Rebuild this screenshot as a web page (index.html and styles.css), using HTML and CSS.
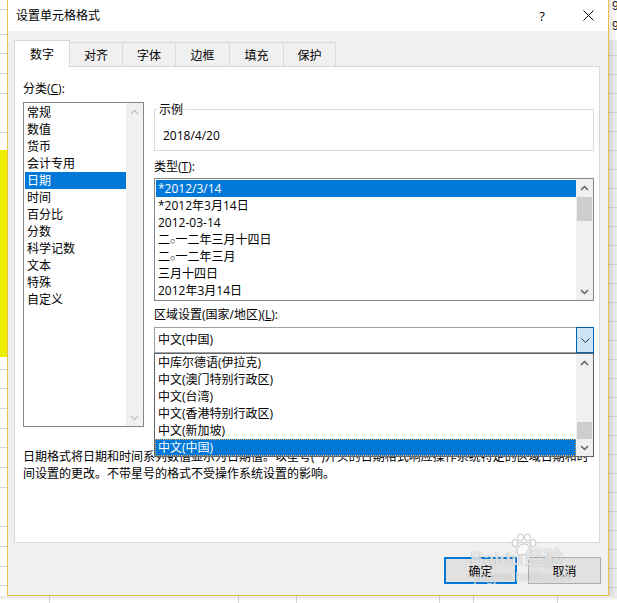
FILE: index.html
```html
<!DOCTYPE html>
<html lang="zh-CN">
<head>
<meta charset="utf-8">
<title>设置单元格格式</title>
<link rel="stylesheet" href="styles.css">
</head>
<body>
<div class="screen">
  <div class="sheet-left"></div>

  <div class="dialog">
    <div class="titlebar">
      <span class="title">设置单元格格式</span>
      <span class="help">?</span>
      <span class="close"><svg width="11" height="11" viewBox="0 0 11 11"><path d="M0.5 0.5 L10.5 10.5 M10.5 0.5 L0.5 10.5" stroke="#000" stroke-width="1" fill="none"/></svg></span>
    </div>

    <div class="body">
      <div class="tabs">
        <div class="tab active">数字</div>
        <div class="tab">对齐</div>
        <div class="tab">字体</div>
        <div class="tab">边框</div>
        <div class="tab">填充</div>
        <div class="tab">保护</div>
      </div>

      <div class="panel">
        <div class="cols">
          <div class="col-left">
            <div class="label">分类(<u>C</u>):</div>
            <div class="listbox category">
              <div class="rows">
                <div class="row">常规</div>
                <div class="row">数值</div>
                <div class="row">货币</div>
                <div class="row">会计专用</div>
                <div class="row selected">日期</div>
                <div class="row">时间</div>
                <div class="row">百分比</div>
                <div class="row">分数</div>
                <div class="row">科学记数</div>
                <div class="row">文本</div>
                <div class="row">特殊</div>
                <div class="row">自定义</div>
              </div>
              <div class="scrollbar disabled">
                <div class="sb-btn"><svg width="9" height="6" viewBox="0 0 9 6"><path d="M1 5 L4.5 1.5 L8 5" fill="none" stroke="#c6c6c6" stroke-width="1.5"/></svg></div>
                <div class="sb-track"></div>
                <div class="sb-btn"><svg width="9" height="6" viewBox="0 0 9 6"><path d="M1 1 L4.5 4.5 L8 1" fill="none" stroke="#c6c6c6" stroke-width="1.5"/></svg></div>
              </div>
            </div>
          </div>

          <div class="col-right">
            <div class="group">
              <div class="group-title">示例</div>
              <div class="group-value">2018/4/20</div>
            </div>

            <div class="label label-type">类型(<u>T</u>):</div>
            <div class="listbox types">
              <div class="rows">
                <div class="row selected">*2012/3/14</div>
                <div class="row">*2012年3月14日</div>
                <div class="row">2012-03-14</div>
                <div class="row">二<span class="ling">○</span>一二年三月十四日</div>
                <div class="row">二<span class="ling">○</span>一二年三月</div>
                <div class="row">三月十四日</div>
                <div class="row">2012年3月14日</div>
              </div>
              <div class="scrollbar">
                <div class="sb-btn"><svg width="9" height="6" viewBox="0 0 9 6"><path d="M1 5 L4.5 1.5 L8 5" fill="none" stroke="#606060" stroke-width="1.5"/></svg></div>
                <div class="sb-track"><div class="sb-thumb thumb-type"></div></div>
                <div class="sb-btn"><svg width="9" height="6" viewBox="0 0 9 6"><path d="M1 1 L4.5 4.5 L8 1" fill="none" stroke="#606060" stroke-width="1.5"/></svg></div>
              </div>
            </div>

            <div class="label label-locale">区域设置(国家/地区)(<u>L</u>):</div>
            <div class="combo-wrap">
              <div class="combo">
                <div class="combo-text">中文(中国)</div>
                <div class="combo-btn"><svg width="9" height="5" viewBox="0 0 9 5"><path d="M0.5 0.5 L4.5 4.5 L8.5 0.5" fill="none" stroke="#333" stroke-width="1"/></svg></div>
              </div>
              <div class="listbox dropdown">
                <div class="rows">
                  <div class="row">中库尔德语(伊拉克)</div>
                  <div class="row">中文(澳门特别行政区)</div>
                  <div class="row">中文(台湾)</div>
                  <div class="row">中文(香港特别行政区)</div>
                  <div class="row">中文(新加坡)</div>
                  <div class="row selected focus">中文(中国)</div>
                </div>
                <div class="scrollbar">
                  <div class="sb-btn"><svg width="9" height="6" viewBox="0 0 9 6"><path d="M1 5 L4.5 1.5 L8 5" fill="none" stroke="#606060" stroke-width="1.5"/></svg></div>
                  <div class="sb-track end"><div class="sb-thumb thumb-drop"></div></div>
                  <div class="sb-btn"><svg width="9" height="6" viewBox="0 0 9 6"><path d="M1 1 L4.5 4.5 L8 1" fill="none" stroke="#606060" stroke-width="1.5"/></svg></div>
                </div>
              </div>
            </div>
          </div>
        </div>

        <div class="desc">
          <div class="desc-line">日期格式将日期和时间系列数值显示为日期值。以星号(*)开头的日期格式响应操作系统特定的区域日期和时</div>
          <div class="desc-line">间设置的更改。不带星号的格式不受操作系统设置的影响。</div>
        </div>
      </div>

      <div class="buttons">
        <div class="btn default">确定</div>
        <div class="btn">取消</div>
      </div>
    </div>
  </div>

  <div class="sheet-right">
    <div class="cell-text">9</div>
    <div class="cell-text">9</div>
  </div>
  <div class="sheet-bottom"></div>

  <div class="watermark">
    <svg class="wm-paw" width="28" height="24" viewBox="0 0 28 24">
      <g fill="rgba(255,255,255,0.75)" stroke="rgba(130,130,130,0.45)" stroke-width="1">
        <ellipse cx="5" cy="10" rx="3" ry="3.6"/>
        <ellipse cx="10.5" cy="4.5" rx="3" ry="3.6"/>
        <ellipse cx="17.5" cy="4.5" rx="3" ry="3.6"/>
        <ellipse cx="23" cy="10" rx="3" ry="3.6"/>
        <path d="M14 11 C9 11 6 17 7 20 C8 23 11 22 14 21.5 C17 22 20 23 21 20 C22 17 19 11 14 11 Z"/>
      </g>
    </svg>
    <div class="wm-brand"><span>Bai</span><span class="wm-du">du</span><span>经验</span></div>
    <div class="wm-url">jingyan.baidu.com</div>
  </div>
</div>
</body>
</html>
```

FILE: styles.css
```css
* { box-sizing: border-box; }

html, body {
  margin: 0;
  padding: 0;
}

body {
  width: 617px;
  height: 603px;
  overflow: hidden;
  font-family: "Open Sans", "Noto Sans CJK SC", sans-serif;
  font-size: 12px;
  color: #000;
  background: #fff;
}

.screen {
  position: relative;
  display: grid;
  grid-template-columns: 7px 602px 8px;
  grid-template-rows: 596px 7px;
  width: 617px;
  height: 603px;
}

/* spreadsheet behind the dialog */
.sheet-left {
  grid-column: 1;
  grid-row: 1;
  background:
    linear-gradient(to bottom, transparent 150px, #eeee00 150px, #eeee00 357px, transparent 357px),
    repeating-linear-gradient(to bottom, #fff 0, #fff 18.7px, #d4d4d4 18.7px, #d4d4d4 19.7px);
  background-position: 0 0, 0 15px;
}

.sheet-right {
  grid-column: 3;
  grid-row: 1;
  overflow: hidden;
  background:
    linear-gradient(to right, rgba(0,0,0,0.10), rgba(0,0,0,0) 7px),
    linear-gradient(to bottom, #fff 0, #fff 40px, transparent 40px),
    repeating-linear-gradient(to bottom, #ececec 0, #ececec 18px, #d2d2d2 18px, #d2d2d2 19px);
  background-position: 0 0, 0 0, 0 18px;
}

.cell-text {
  height: 20px;
  line-height: 12px;
  padding-left: 3px;
  font-family: "Liberation Sans", sans-serif;
  font-size: 12px;
  color: #222;
}

.sheet-bottom {
  grid-column: 1 / 4;
  grid-row: 2;
  background:
    linear-gradient(to bottom, rgba(0,0,0,0.10), rgba(0,0,0,0) 5px),
    linear-gradient(#d4d4d4, #d4d4d4) 49px 0 / 1px 100% no-repeat,
    linear-gradient(#d4d4d4, #d4d4d4) 238px 0 / 1px 100% no-repeat,
    linear-gradient(#d4d4d4, #d4d4d4) 296px 0 / 1px 100% no-repeat,
    linear-gradient(#d4d4d4, #d4d4d4) 439px 0 / 1px 100% no-repeat,
    linear-gradient(#d4d4d4, #d4d4d4) 473px 0 / 1px 100% no-repeat,
    linear-gradient(#d4d4d4, #d4d4d4) 557px 0 / 1px 100% no-repeat,
    #fff;
}

/* dialog */
.dialog {
  grid-column: 2;
  grid-row: 1;
  display: flex;
  flex-direction: column;
  background: #f0f0f0;
  border: 1px solid #e8c14a;
  border-top: none;
}

.titlebar {
  height: 31px;
  flex: none;
  display: flex;
  align-items: center;
  padding-left: 8px;
  padding-right: 10px;
  background: #fff;
}

.title {
  flex: 1;
  line-height: 17px;
  font-size: 12px;
}

.help {
  width: 20px;
  text-align: center;
  font-size: 13px;
  margin-right: 26px;
}

.close {
  width: 20px;
  display: flex;
  justify-content: center;
  align-items: center;
}

.body {
  flex: 1;
  display: flex;
  flex-direction: column;
  padding: 9px 7px 0 6px;
}

/* tabs */
.tabs {
  display: flex;
  align-items: flex-start;
  height: 26px;
}

.tab {
  height: 24px;
  margin-top: 2px;
  margin-left: -1px;
  padding-top: 4px;
  line-height: 17px;
  text-align: center;
  background: #f0f0f0;
  border: 1px solid #d9d9d9;
  border-bottom: none;
}

.tab:nth-child(1) { width: 56px; }
.tab:nth-child(2) { width: 54px; }
.tab:nth-child(3) { width: 54px; }
.tab:nth-child(4) { width: 55px; }
.tab:nth-child(5) { width: 55px; }
.tab:nth-child(6) { width: 53px; }

.tab.active {
  position: relative;
  z-index: 1;
  height: 27px;
  margin-top: 0;
  margin-left: 0;
  padding-top: 5px;
  background: #fff;
}

.panel {
  width: 586px;
  height: 477px;
  flex: none;
  background: #fff;
  border: 1px solid #d9d9d9;
  padding: 13px 5px 0 8px;
}

.cols {
  display: flex;
  gap: 10px;
  align-items: flex-start;
}

.col-left { width: 121px; flex: none; }
.col-right { width: 440px; flex: none; }

.label {
  line-height: 17px;
  white-space: nowrap;
}

/* list boxes */
.listbox {
  display: flex;
  background: #fff;
  border: 1px solid #828790;
}

.rows {
  flex: 1;
  min-width: 0;
  padding: 1px 0 1px 1px;
  overflow: hidden;
}

.row {
  height: 17px;
  line-height: 17px;
  padding-left: 2px;
  white-space: nowrap;
  overflow: hidden;
}

.row.selected {
  background: #0078d7;
  color: #fff;
}

.ling {
  font-family: "Liberation Sans", "DejaVu Sans", sans-serif;
  font-size: 9px;
}

.scrollbar {
  width: 17px;
  flex: none;
  display: flex;
  flex-direction: column;
  background: #f0f0f0;
}

.sb-btn {
  height: 17px;
  flex: none;
  display: flex;
  align-items: center;
  justify-content: center;
}

.sb-track {
  flex: 1;
  display: flex;
  flex-direction: column;
  padding: 0 1px;
}

.sb-track.end { justify-content: flex-end; }

.sb-thumb { background: #cdcdcd; }
.thumb-type { height: 24px; margin-top: 1px; }
.thumb-drop { height: 17px; }

.category {
  margin-top: 5px;
  height: 325px;
}

/* sample group box */
.group {
  margin-top: 29px;
  border: 1px solid #dcdcdc;
  padding: 0 0 6px 0;
}

.group-title {
  width: fit-content;
  margin: -9px 0 0 2px;
  padding: 0 2px;
  line-height: 17px;
  background: #fff;
}

.group-value {
  margin-top: 9px;
  padding-left: 8px;
  line-height: 17px;
}

.label-type { margin-top: 7px; }

.types {
  margin-top: 3px;
  height: 123px;
}

.label-locale { margin-top: 5px; }

/* combo box with open drop-down */
.combo-wrap {
  position: relative;
  margin-top: 4px;
}

.combo {
  height: 26px;
  display: flex;
  background: #fff;
  border: 1px solid #a0a0a0;
}

.combo-text {
  flex: 1;
  padding-left: 3px;
  line-height: 24px;
}

.combo-btn {
  width: 18px;
  margin: -1px -1px -1px 0;
  display: flex;
  align-items: center;
  justify-content: center;
  background: #cce4f7;
  border: 1px solid #0063b1;
}

.dropdown {
  position: absolute;
  top: 26px;
  left: 0;
  z-index: 2;
  width: 440px;
  height: 104px;
  border-color: #646464;
}

.dropdown .rows { padding: 0; }
.dropdown .row { padding-left: 3px; }

.row.focus {
  outline: 1px dotted #e9a860;
  outline-offset: -1px;
}

/* description */
.desc {
  margin-top: 21px;
  line-height: 17px;
}

.desc-line {
  white-space: nowrap;
  overflow: hidden;
}

/* buttons */
.buttons {
  display: flex;
  justify-content: flex-end;
  gap: 11px;
  margin-top: 14px;
}

.btn {
  width: 73px;
  height: 27px;
  display: flex;
  align-items: center;
  justify-content: center;
  background: #e1e1e1;
  border: 1px solid #adadad;
}

.btn.default { border: 2px solid #0078d7; }

/* watermark overlay */
.watermark {
  position: absolute;
  left: 470px;
  top: 533px;
  width: 118px;
  pointer-events: none;
  color: rgba(255,255,255,0.72);
  text-shadow: 0 0 1px rgba(90,90,90,0.55);
}

.wm-paw {
  display: block;
  margin-left: 40px;
}

.wm-brand {
  margin-top: -8px;
  display: flex;
  align-items: baseline;
  font-family: "Liberation Sans", "Noto Sans CJK SC", sans-serif;
  font-weight: bold;
  font-size: 19px;
  line-height: 20px;
}

.wm-du {
  margin-right: 2px;
}

.wm-url {
  margin-top: 1px;
  padding-left: 4px;
  font-family: "Liberation Sans", sans-serif;
  font-size: 12px;
  line-height: 14px;
}
```
